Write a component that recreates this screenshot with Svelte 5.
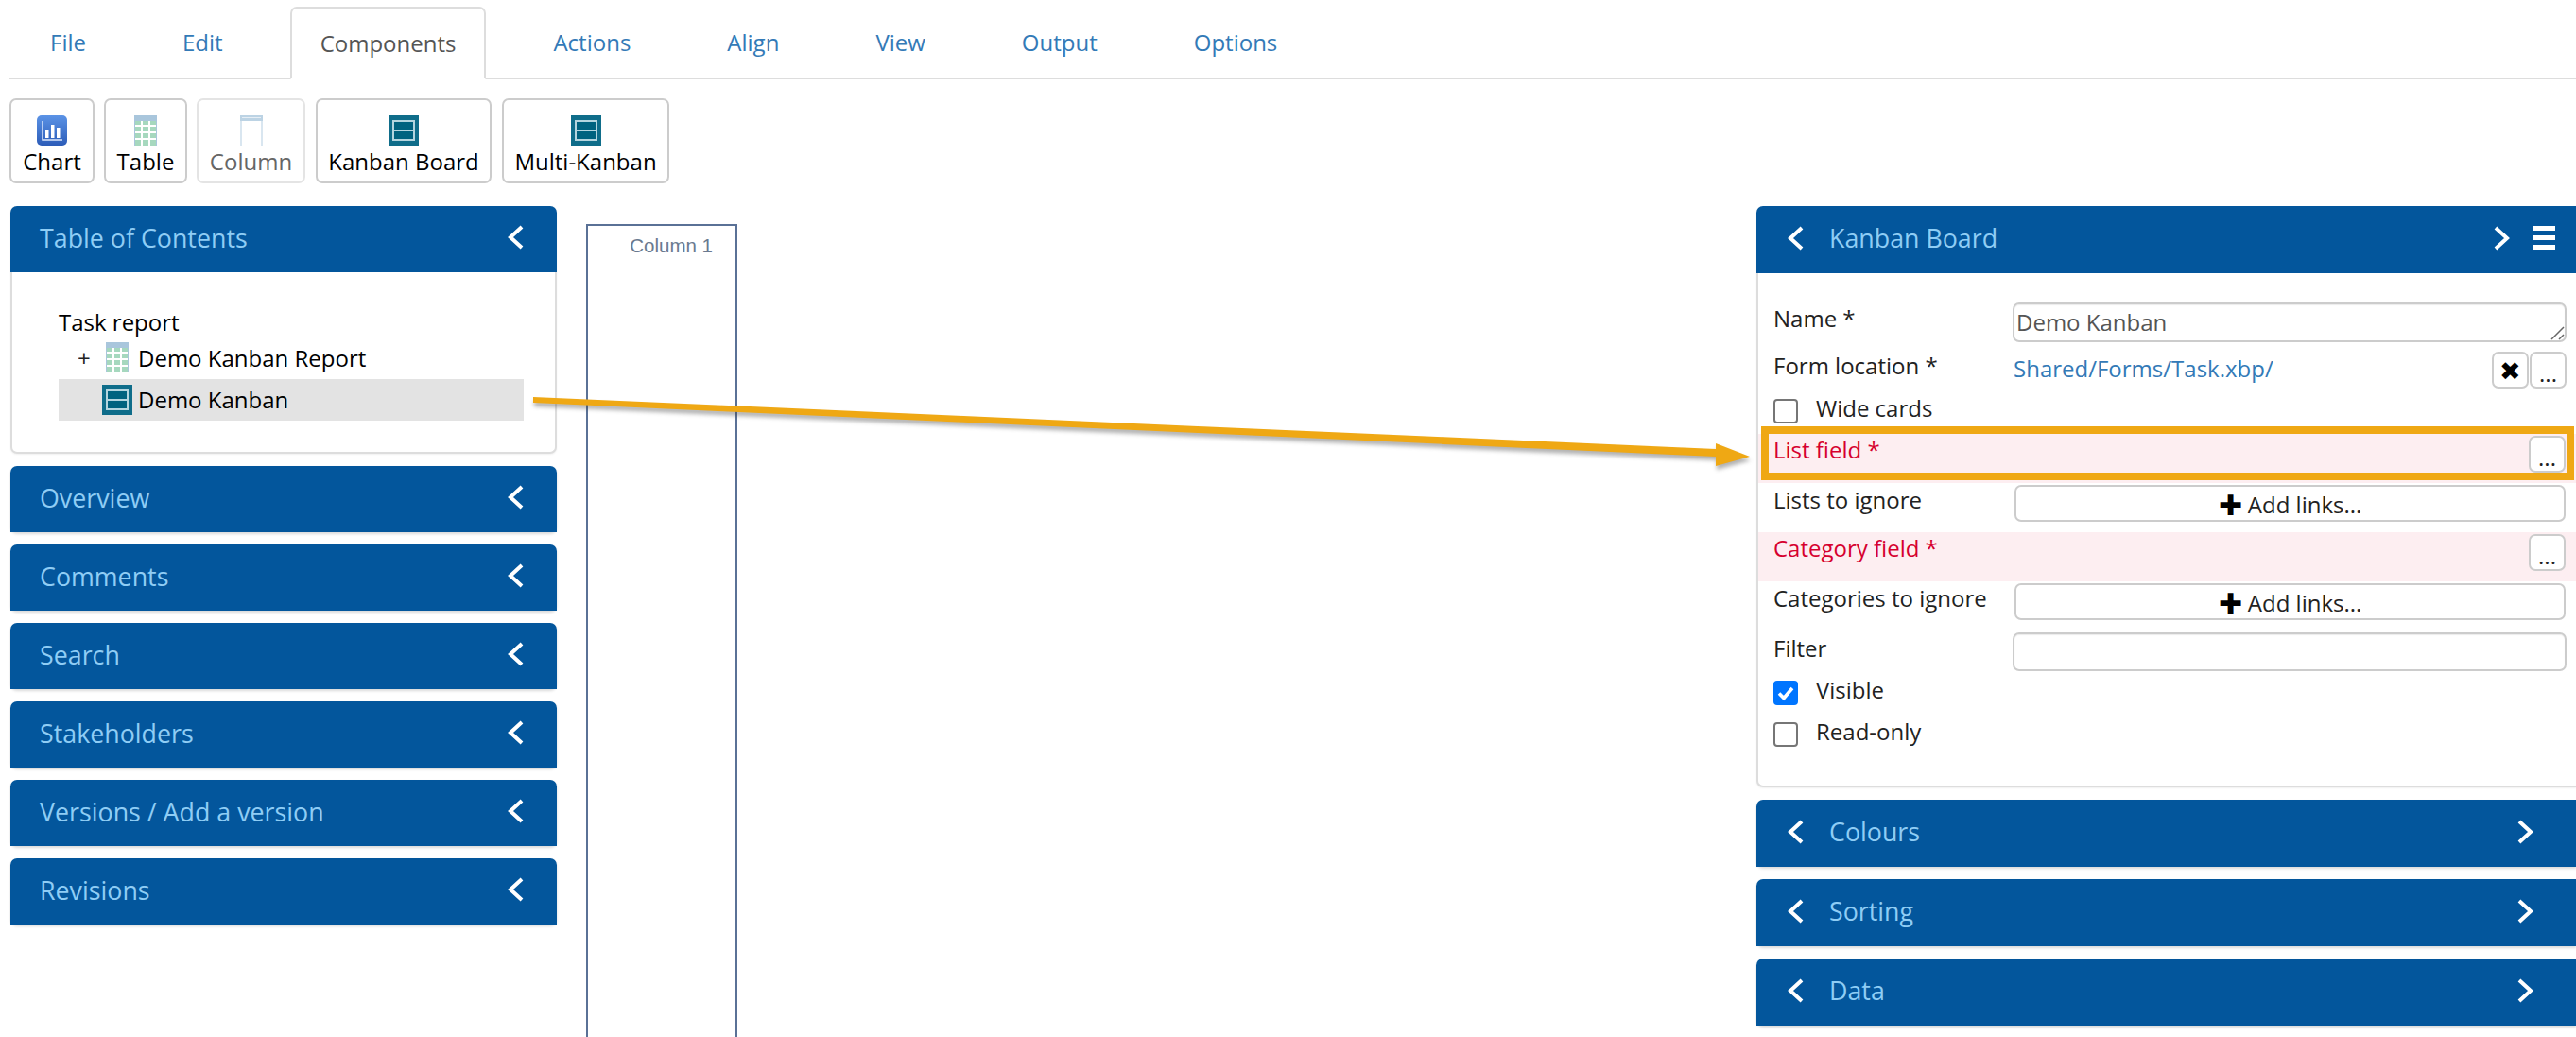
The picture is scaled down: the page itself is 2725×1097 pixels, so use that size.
<script>
	const tabs = ['File', 'Edit', 'Components', 'Actions', 'Align', 'View', 'Output', 'Options'];
	const leftPanels = ['Overview', 'Comments', 'Search', 'Stakeholders', 'Versions / Add a version', 'Revisions'];
	const rightPanels = ['Colours', 'Sorting', 'Data'];
</script>

{#snippet kanbanIcon()}
	<svg class="icon" width="32" height="32" viewBox="0 0 32 32">
		<rect width="32" height="32" fill="#0f6d8a" />
		<rect x="5" y="6" width="22" height="20" fill="#00627f" stroke="#b4d5df" stroke-width="2" />
		<line x1="5" y1="16" x2="27" y2="16" stroke="#b4d5df" stroke-width="2" />
	</svg>
{/snippet}

{#snippet tableIcon()}
	<svg class="icon" width="24" height="32" viewBox="0 0 24 32">
		<rect width="24" height="32" fill="#a6d8be" />
		<rect width="24" height="6" fill="#a9c6dc" />
		<rect y="10" width="24" height="2" fill="#fff" />
		<rect y="17" width="24" height="2" fill="#fff" />
		<rect y="24" width="24" height="2" fill="#fff" />
		<rect x="7" y="6" width="2" height="26" fill="#fff" />
		<rect x="15" y="6" width="2" height="26" fill="#fff" />
		<rect x="0" y="0" width="1" height="32" fill="#a9c6dc" />
		<rect x="23" y="0" width="1" height="32" fill="#a9c6dc" />
	</svg>
{/snippet}

{#snippet chevron(dir)}
	<svg class="chev" width="20" height="26" viewBox="0 0 20 26">
		{#if dir === 'left'}
			<path d="M17 2 L5 13 L17 24" fill="none" stroke="#fff" stroke-width="4" />
		{:else}
			<path d="M3 2 L15 13 L3 24" fill="none" stroke="#fff" stroke-width="4" />
		{/if}
	</svg>
{/snippet}

<div class="page">
	<nav class="tabs">
		{#each tabs as tab}
			<span class="tab" class:active={tab === 'Components'}>{tab}</span>
		{/each}
	</nav>

	<div class="toolbar">
		<button class="tool chart">
			<svg class="icon" width="32" height="32" viewBox="0 0 32 32">
				<defs>
					<linearGradient id="chartBg" x1="0" y1="0" x2="0" y2="1">
						<stop offset="0" stop-color="#5b93e6" />
						<stop offset="1" stop-color="#2c5cb8" />
					</linearGradient>
				</defs>
				<rect width="32" height="32" rx="5" fill="url(#chartBg)" />
				<path d="M6 6 V26 H27" fill="none" stroke="#dbe8fb" stroke-width="1.5" />
				<rect x="9" y="15" width="3.5" height="9" fill="#fff" />
				<rect x="15" y="10" width="3.5" height="14" fill="#fff" />
				<rect x="21" y="13" width="3.5" height="11" fill="#fff" />
			</svg>
			Chart
		</button>
		<button class="tool table">{@render tableIcon()}Table</button>
		<button class="tool column" disabled>
			<svg class="icon" width="24" height="32" viewBox="0 0 24 32">
				<rect x="0" y="0" width="24" height="6" fill="#bcd3e4" />
				<rect x="0" y="6" width="2" height="26" fill="#d9e6f0" />
				<rect x="22" y="6" width="2" height="26" fill="#d9e6f0" />
				<rect x="2" y="2" width="20" height="1" fill="#e6eef5" />
			</svg>
			Column
		</button>
		<button class="tool kanban">{@render kanbanIcon()}Kanban Board</button>
		<button class="tool multi">{@render kanbanIcon()}Multi-Kanban</button>
	</div>

	<main class="workspace">
		<aside class="left">
			<section class="panel">
				<header class="head">
					<span class="title">Table of Contents</span>
					{@render chevron('left')}
				</header>
				<div class="toc">
					<div class="toc-line">Task report</div>
					<div class="toc-line nested">
						<span class="plus">+</span>
						{@render tableIcon()}
						<span>Demo Kanban Report</span>
					</div>
					<div class="toc-line selected">
						{@render kanbanIcon()}
						<span>Demo Kanban</span>
					</div>
				</div>
			</section>
			{#each leftPanels as name}
				<section class="panel closed">
					<header class="head">
						<span class="title">{name}</span>
						{@render chevron('left')}
					</header>
				</section>
			{/each}
		</aside>

		<div class="col-box"><span>Column 1</span></div>

		<aside class="right">
			<section class="panel">
				<header class="head props">
					{@render chevron('left')}
					<span class="title">Kanban Board</span>
					<span class="head-end">
						{@render chevron('right')}
						<span class="burger"><i></i><i></i><i></i></span>
					</span>
				</header>
				<div class="form">
					<div class="row r-name">
						<span class="lbl">Name *</span>
						<div class="textarea">
							Demo Kanban
							<svg class="grip" width="16" height="16" viewBox="0 0 16 16">
								<path d="M2 15 L15 2 M10 15 L15 10" stroke="#666" stroke-width="1.5" />
							</svg>
						</div>
					</div>
					<div class="row r-form">
						<span class="lbl">Form location *</span>
						<a class="link" href="#top">Shared/Forms/Task.xbp/</a>
						<button class="mini cross">✖</button>
						<button class="mini">...</button>
					</div>
					<label class="check r-wide"><span class="box"></span>Wide cards</label>
					<div class="row req r-list">
						<span class="lbl">List field *</span>
						<button class="mini end">...</button>
						<div class="callout"></div>
					</div>
					<div class="row r-links">
						<span class="lbl">Lists to ignore</span>
						<button class="add"><b>✚</b> Add links...</button>
					</div>
					<div class="row req r-cat">
						<span class="lbl">Category field *</span>
						<button class="mini end">...</button>
					</div>
					<div class="row r-links">
						<span class="lbl">Categories to ignore</span>
						<button class="add"><b>✚</b> Add links...</button>
					</div>
					<div class="row r-filter">
						<span class="lbl">Filter</span>
						<div class="input"></div>
					</div>
					<label class="check r-visible">
						<span class="box on">
							<svg width="26" height="26" viewBox="0 0 26 26">
								<path d="M6 13.5 L11 18.5 L20 8" fill="none" stroke="#fff" stroke-width="3.6" />
							</svg>
						</span>
						Visible
					</label>
					<label class="check r-readonly"><span class="box"></span>Read-only</label>
				</div>
			</section>
			{#each rightPanels as name}
				<section class="panel closed">
					<header class="head props">
						{@render chevron('left')}
						<span class="title">{name}</span>
						<span class="head-end single">{@render chevron('right')}</span>
					</header>
				</section>
			{/each}
		</aside>
	</main>

	<!-- annotation arrow drawn over the screenshot -->
	<svg class="arrow" width="2725" height="1097" viewBox="0 0 2725 1097">
		<path d="M564 420 L1815 475 L1815 469 L1851 483 L1815 493 L1815 483 L564 426 Z" fill="#efa814" />
	</svg>
</div>

<style>
	:global(body) {
		margin: 0;
		background: #fff;
	}

	.page {
		position: relative;
		width: 2725px;
		height: 1097px;
		overflow: hidden;
		font-family: 'Open Sans', sans-serif;
		font-size: 24px;
		color: #333;
		box-sizing: border-box;
		padding-left: 10px;
	}

	.tabs {
		display: flex;
		align-items: flex-end;
		gap: 40px;
		height: 84px;
		padding: 7px 0 0 12px;
		box-sizing: border-box;
		border-bottom: 2px solid #ddd;
	}

	.tab {
		height: 75px;
		line-height: 76px;
		padding: 0 31px;
		color: #337ab7;
		box-sizing: border-box;
	}

	.tab.active {
		height: 77px;
		margin-bottom: -2px;
		line-height: 74px;
		color: #555;
		background: #fff;
		border: 2px solid #ddd;
		border-bottom-color: #fff;
		border-radius: 7px 7px 0 0;
		padding: 0 30px;
	}

	.toolbar {
		display: flex;
		gap: 10px;
		margin-top: 20px;
	}

	.tool {
		display: flex;
		flex-direction: column;
		align-items: center;
		height: 90px;
		box-sizing: border-box;
		padding: 16px 0 0;
		background: #fff;
		border: 2px solid #ccc;
		border-radius: 7px;
		font: inherit;
		line-height: 33px;
		color: #000;
	}

	.tool .icon {
		display: block;
		margin-bottom: 0;
	}

	.chart { width: 90px; }
	.table { width: 88px; }
	.column {
		width: 115px;
		color: #666;
		border-color: #e4e4e4;
	}
	.kanban { width: 186px; margin-left: 1px; }
	.multi { width: 177px; margin-left: 1px; }

	.workspace {
		display: flex;
		align-items: flex-start;
		margin-top: 24px;
		margin-left: 1px;
	}

	.left {
		flex: none;
		width: 578px;
	}

	.panel {
		background: #fff;
		border: 2px solid #ddd;
		border-top-width: 0;
		border-radius: 7px;
		box-shadow: 0 1px 2px rgba(0, 0, 0, 0.06);
		margin-bottom: 13px;
		box-sizing: border-box;
	}

	.panel.closed {
		border-width: 0;
		box-shadow: 0 2px 3px rgba(0, 0, 0, 0.15);
	}

	.head {
		display: flex;
		align-items: center;
		justify-content: space-between;
		height: 70px;
		padding: 0 34px 4px 31px;
		box-sizing: border-box;
		background: #03569c;
		border-radius: 7px 7px 0 0;
		margin: 0 -2px;
	}

	.closed .head {
		margin: 0;
	}

	.title {
		font-size: 26.8px;
		color: #8fcdf5;
	}

	.chev {
		display: block;
		flex: none;
	}

	.toc {
		height: 190px;
		box-sizing: border-box;
		padding: 33px 33px 0 49px;
		color: #000;
	}

	.toc-line {
		display: flex;
		align-items: center;
		height: 38px;
	}

	.nested {
		padding-left: 20px;
	}

	.plus {
		width: 30px;
		color: #222;
	}

	.nested .icon {
		margin-right: 10px;
	}

	.selected {
		height: 44px;
		box-sizing: border-box;
		margin-top: 4px;
		padding: 0 0 2px 46px;
		background: #e3e3e3;
	}

	.selected .icon {
		margin-right: 6px;
		margin-bottom: -2px;
	}

	.col-box {
		flex: none;
		width: 160px;
		height: 900px;
		box-sizing: border-box;
		margin: 19px 0 0 31px;
		padding: 9px 24px 0 0;
		border: 2px solid #5a7196;
		text-align: right;
		font-family: 'Liberation Sans', sans-serif;
		font-size: 20.5px;
		color: #6a7a90;
	}

	.right {
		flex: none;
		width: 867px;
		margin-left: auto;
		margin-right: 0;
	}

	.right .panel {
		border-right-width: 0;
		border-radius: 7px 0 0 7px;
	}

	.right .panel.closed {
		border-width: 0;
	}

	.right .head {
		height: 71px;
		margin: 0 0 0 -2px;
		padding: 0 22px 4px 31px;
		justify-content: flex-start;
		border-radius: 7px 0 0 0;
	}

	.right .closed .head {
		margin: 0;
	}

	.right .title {
		margin-left: 26px;
	}

	.head-end {
		display: flex;
		align-items: center;
		gap: 23px;
		margin-left: auto;
	}

	.head-end.single {
		padding-right: 21px;
	}

	.burger {
		display: flex;
		flex-direction: column;
		gap: 5px;
		width: 23px;
	}

	.burger i {
		display: block;
		height: 5px;
		background: #fff;
	}

	.form {
		height: 542px;
		box-sizing: border-box;
		padding-top: 31px;
		color: #222;
	}

	.row {
		position: relative;
		display: flex;
		align-items: flex-start;
		padding: 0 10px 0 16px;
	}

	.lbl {
		flex: none;
		width: 253px;
		line-height: 33px;
	}

	.textarea,
	.input {
		position: relative;
		flex: 1;
		box-sizing: border-box;
		height: 42px;
		padding: 2px 2px;
		line-height: 34px;
		color: #555;
		border: 2px solid #ccc;
		border-radius: 7px;
		box-shadow: inset 0 1px 1px rgba(0, 0, 0, 0.08);
	}

	.grip {
		position: absolute;
		right: 0;
		bottom: 0;
	}

	.input {
		height: 41px;
	}

	.r-form {
		margin-top: 10px;
		height: 39px;
	}

	.r-form .lbl {
		margin-top: -2px;
	}

	.link {
		flex: 1;
		padding-left: 1px;
		line-height: 36px;
		color: #337ab7;
		text-decoration: none;
	}

	.mini {
		flex: none;
		width: 39px;
		height: 39px;
		box-sizing: border-box;
		padding: 0;
		background: #fff;
		border: 2px solid #ccc;
		border-radius: 7px;
		font: inherit;
		line-height: 42px;
		color: #222;
	}

	.cross {
		font-size: 27px;
		line-height: 35px;
		color: #000;
		margin-right: 1px;
	}

	.end {
		margin-left: auto;
		margin-top: 2px;
		margin-right: 1px;
	}

	.check {
		display: flex;
		align-items: flex-start;
		padding-left: 16px;
		line-height: 20px;
	}

	.box {
		flex: none;
		width: 26px;
		height: 26px;
		box-sizing: border-box;
		margin-right: 19px;
		border: 2px solid #767676;
		border-radius: 4px;
		background: #fff;
	}

	.box.on {
		background: #0075ff;
		border: 0;
	}

	.box.on svg {
		display: block;
	}

	.r-wide {
		margin-top: 11px;
	}

	.req {
		height: 52px;
		background: #fdeef1;
		color: #d6002e;
	}

	.r-list {
		margin-top: 11px;
	}

	.callout {
		position: absolute;
		left: 3px;
		right: 2px;
		top: -8px;
		height: 57px;
		box-sizing: border-box;
		border: 8px solid #efa814;
	}

	.r-cat {
		margin-top: 11px;
	}

	.r-links {
		margin-top: 2px;
		height: 39px;
	}

	.r-links .lbl {
		margin-top: -1px;
	}

	.add {
		flex: 1;
		box-sizing: border-box;
		height: 39px;
		margin: 0 1px 0 2px;
		padding: 0;
		background: #fff;
		border: 2px solid #ccc;
		border-radius: 7px;
		font: inherit;
		line-height: 37px;
		color: #222;
	}

	.add b {
		color: #000;
		font-size: 30px;
		font-weight: normal;
		line-height: 24px;
		vertical-align: -2px;
	}

	.r-filter {
		margin-top: 13px;
	}

	.r-visible {
		margin-top: 10px;
	}

	.r-readonly {
		margin-top: 18px;
	}

	.arrow {
		position: absolute;
		left: 0;
		top: 0;
		pointer-events: none;
		filter: drop-shadow(1px 4px 2px rgba(60, 60, 60, 0.4));
	}
</style>
